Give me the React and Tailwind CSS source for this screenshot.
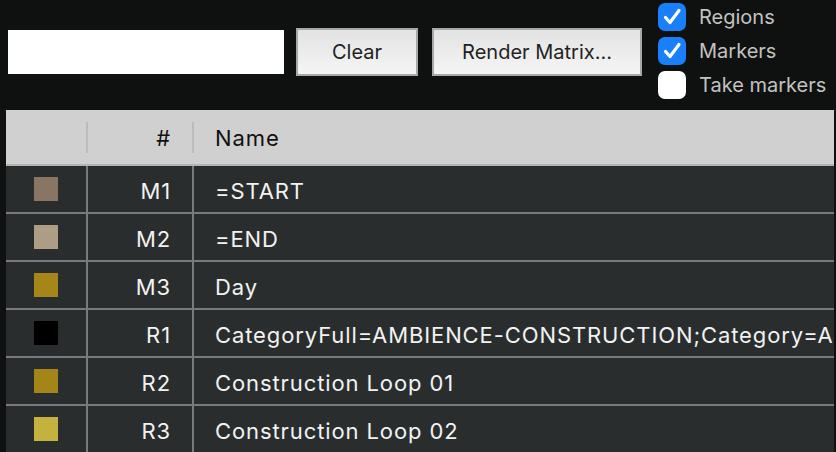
import React from 'react';

const rows = [
  { id: 'M1', name: '=START', color: 'bg-[#8a7565]' },
  { id: 'M2', name: '=END', color: 'bg-[#ae9d85]' },
  { id: 'M3', name: 'Day', color: 'bg-[#a68618]' },
  { id: 'R1', name: 'CategoryFull=AMBIENCE-CONSTRUCTION;Category=AMBIENCE;SubCategory=CONSTRUCTION', color: 'bg-black' },
  { id: 'R2', name: 'Construction Loop 01', color: 'bg-[#a48518]' },
  { id: 'R3', name: 'Construction Loop 02', color: 'bg-[#c5b13e]' },
];

const Check = ({ checked, label }) => (
  <div className="flex items-center h-[28px]">
    <div
      className={`w-[28px] h-[28px] rounded-[7px] flex items-center justify-center ${
        checked ? 'bg-[#1a7ffb]' : 'bg-white'
      }`}
    >
      {checked && (
        <svg width="28" height="28" viewBox="0 0 28 28">
          <path d="M7.5 14.5l4.5 5 9-12" fill="none" stroke="white" strokeWidth="3.2" strokeLinecap="round" strokeLinejoin="round" />
        </svg>
      )}
    </div>
    <span className="ml-[13px] text-[20px] text-[#c2c2c2] leading-none">{label}</span>
  </div>
);

const Button = ({ children, width }) => (
  <button
    className={`${width} h-[48px] mt-[28px] border-2 border-[#a8a8a8] bg-gradient-to-b from-[#e3e3e3] to-[#f5f5f5] text-[20px] text-[#222]`}
  >
    {children}
  </button>
);

export default function App() {
  return (
    <div className="w-[836px] h-[452px] overflow-hidden bg-[#0f1110] font-['Inter','Liberation_Sans',sans-serif]">
      {/* Toolbar */}
      <div className="flex h-[110px]">
        <input className="ml-[8px] mt-[30px] w-[276px] h-[44px] bg-white outline-none" />
        <div className="ml-[12px]">
          <Button width="w-[122px]">Clear</Button>
        </div>
        <div className="ml-[14px]">
          <Button width="w-[210px]">Render Matrix...</Button>
        </div>
        <div className="ml-[16px] mt-[3px] flex flex-col gap-[6px]">
          <Check checked label="Regions" />
          <Check checked label="Markers" />
          <Check label="Take markers" />
        </div>
      </div>

      {/* Table */}
      <div className="ml-[6px] w-[828px] text-[22px] tracking-[0.9px]">
        <div className="flex h-[56px] bg-[#d0d0d0] border-b-2 border-[#b4b4b4] text-[#111]">
          <div className="w-[80px] shrink-0" />
          <div className="w-[2px] h-[31px] mt-[12px] bg-[#bcbcbc]" />
          <div className="w-[104px] shrink-0 flex items-center justify-end pr-[21px] pt-[2px]">#</div>
          <div className="w-[2px] h-[31px] mt-[12px] bg-[#bcbcbc]" />
          <div className="flex items-center pl-[21px] pt-[2px]">Name</div>
        </div>
        {rows.map((r) => (
          <div key={r.id} className="flex h-[48px] bg-[#2a2d2d] border-b-2 border-[#7a7a7a] text-[#f2f2f2]">
            <div className="w-[80px] shrink-0 flex items-center pl-[28px]">
              <div className={`w-[24px] h-[24px] ${r.color}`} />
            </div>
            <div className="w-[2px] bg-[#7a7a7a]" />
            <div className="w-[104px] shrink-0 flex items-center justify-end pr-[21px] pt-[4px]">{r.id}</div>
            <div className="w-[2px] bg-[#7a7a7a]" />
            <div className="flex-1 min-w-0 flex items-center pl-[21px] pt-[4px] whitespace-nowrap overflow-hidden">{r.name}</div>
          </div>
        ))}
      </div>
    </div>
  );
}
